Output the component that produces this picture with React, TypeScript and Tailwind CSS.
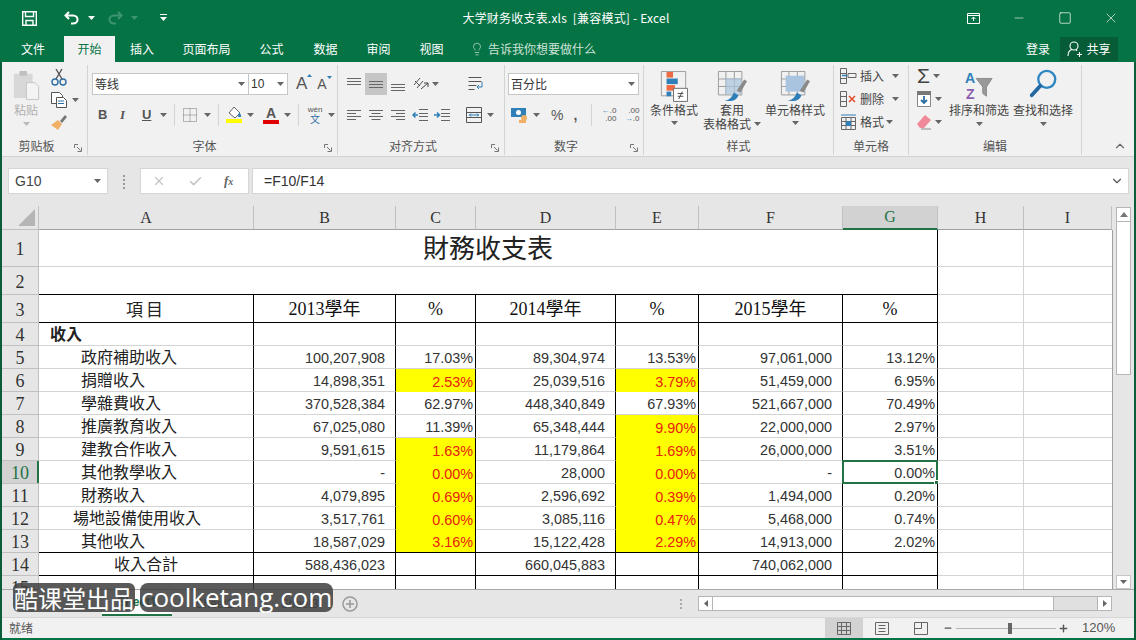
import React from 'react';
import { ChevronDown, ChevronUp, X, Check, Minus, Square, Plus, Lightbulb } from 'lucide-react';

const Caret = ({ className = '', fill = '#666' }: { className?: string; fill?: string }) => (
  <svg width="7" height="4" viewBox="0 0 7 4" className={`shrink-0 ${className}`}><path d="M0 0h7L3.5 4z" fill={fill} /></svg>
);

const Launcher = () => (
  <svg width="8" height="8" viewBox="0 0 8 8" className="absolute right-[5px] bottom-[3px]" fill="none" stroke="#777"><path d="M.5 4V.5H4M3 3l3.5 3.5M3.500 7.500h4v-4" /></svg>
);

const Group = ({ label, w, launcher, children }: { label: string; w: string; launcher?: boolean; children: React.ReactNode }) => (
  <div className={`${w} relative flex flex-col h-[90px] mt-[3px] border-r border-[#d4d4d4]`}>
    <div className="h-[72px]">{children}</div>
    <div className={`h-[18px] flex items-center justify-center text-[12px] text-[#555] ${launcher ? 'pr-[16px]' : ''}`}>{label}</div>
    {launcher && <Launcher />}
  </div>
);

const AlignV = ({ top }: { top: number }) => (
  <svg width="16" height="14" viewBox="0 0 16 14" fill="none" stroke="#666">
    <path d={`M1 ${top + 0.5}h14M1 ${top + 3.5}h14M1 ${top + 6.5}h14`} />
  </svg>
);

const AlignH = ({ d }: { d: string }) => (
  <svg width="16" height="14" viewBox="0 0 16 14" fill="none" stroke="#666"><path d={d} /></svg>
);

const TableIcon = ({ children }: { children?: React.ReactNode }) => (
  <svg width="30" height="32" viewBox="0 0 32 34" fill="none">
    <path d="M1.500 1.500h25v25h-25zM1.500 9.500h25M1.500 17.500h25M9.500 1.500v25M18.500 1.500v25" stroke="#999" />
    {children}
  </svg>
);

const Brush = () => (
  <g>
    <path d="M21 22l8-12 3 2-7 12z" fill="#8a8a8a" />
    <path d="M8 33c5-1 8-4 10-9l5 3c-2 4-5 6-9 6z" fill="#2e7fb8" />
  </g>
);

const BigBtn = ({ w, icon, lines, caret }: { w: string; icon: React.ReactNode; lines: string[]; caret?: 'inline' | 'below' }) => (
  <div className={`${w} flex flex-col items-center pt-[4px] text-[12px] text-[#444] leading-[14px]`}>
    <div className="h-[34px] flex items-center justify-center">{icon}</div>
    <div className="text-center whitespace-nowrap flex items-center">{lines[0]}</div>
    {lines[1] && <div className="whitespace-nowrap flex items-center gap-[3px]">{lines[1]}{caret === 'inline' && <Caret />}</div>}
    {caret === 'below' && <Caret className="mt-[4px]" />}
  </div>
);

const Ribbon = () => (
  <div className="h-[95px] bg-[#f1f1f1] border-b border-[#d2d2d2] flex pl-[2px] font-['Noto_Sans_CJK_SC','Liberation_Sans',sans-serif]">
    <Group label="剪贴板" w="w-[86px]" launcher>
      <div className="flex">
        <div className="w-[48px] flex flex-col items-center pt-[4px] text-[12px] text-[#b0b0b0] leading-[14px]">
          <svg width="28" height="32" viewBox="0 0 30 34">
            <path d="M2 5h20v26H2z" fill="#d8d8d8" />
            <path d="M8 2h8v5H8z" fill="#c0c0c0" />
            <path d="M15.500 14.500h9l4 4v14h-13z" fill="#f4f4f4" stroke="#c4c4c4" />
          </svg>
          <div className="mt-[2px]">粘贴</div>
          <Caret className="mt-[5px] opacity-40" />
        </div>
        <div className="flex flex-col pt-[2px] gap-[4px]">
          <svg width="18" height="20" viewBox="0 0 18 20" fill="none" stroke="#2f6ea5" strokeWidth="1.400"><circle cx="5" cy="15" r="3" /><circle cx="13" cy="15" r="3" /><path d="M6 12L12 2M12 12L6 2" stroke="#555" /></svg>
          <div className="flex items-center gap-[4px]">
            <svg width="18" height="18" viewBox="0 0 18 18" fill="#fff" stroke="#555"><path d="M1.500 1.500h8l3 3v8h-11z" /><path d="M6.500 6.500h7l3 3v7h-10z" /><path d="M8 10h6M8 12.500h6" stroke="#2f6ea5" /></svg>
            <Caret />
          </div>
          <svg width="18" height="18" viewBox="0 0 18 18"><path d="M10 8l5-6 2 2-5 6z" fill="#777" /><path d="M1 12l7-5 4 4-4 6z" fill="#f0b066" /></svg>
        </div>
      </div>
    </Group>
    <Group label="字体" w="w-[250px]" launcher>
      <div className="pl-[4px] pt-[8px]">
        <div className="flex items-center h-[22px]">
          <div className="w-[157px] h-full bg-white border border-[#c6c6c6] flex items-center justify-between pl-[2px] pr-[3px] text-[12px] text-[#333]">等线<Caret /></div>
          <div className="w-[39px] h-full bg-white border border-l-0 border-[#c6c6c6] flex items-center justify-between pl-[2px] pr-[3px] text-[12px] text-[#333] font-['Liberation_Sans',sans-serif]">10<Caret /></div>
          <span className="ml-[8px] text-[17px] text-[#555] font-['Liberation_Sans',sans-serif] relative">A<svg width="5" height="3" viewBox="0 0 5 3" className="absolute -right-[5px] top-[3px]"><path d="M0 3h5L2.500 0z" fill="#2f7fb8" /></svg></span>
          <span className="ml-[10px] text-[14px] text-[#555] font-['Liberation_Sans',sans-serif] relative">A<svg width="5" height="3" viewBox="0 0 5 3" className="absolute -right-[5px] top-[2px]"><path d="M0 0h5L2.500 3z" fill="#2f7fb8" /></svg></span>
        </div>
        <div className="flex items-center h-[20px] mt-[10px] pl-[6px] text-[#555] font-['Liberation_Sans',sans-serif] text-[13px]">
          <span className="w-[8px] font-bold">B</span>
          <span className="w-[6px] ml-[14px] italic font-['Liberation_Serif',serif] font-bold">I</span>
          <span className="w-[9px] ml-[16px] underline font-bold">U</span>
          <Caret className="ml-[9px]" />
          <div className="w-px h-[22px] bg-[#d4d4d4] ml-[7px]" />
          <svg width="14" height="14" viewBox="0 0 14 14" fill="none" stroke="#777" strokeDasharray="1 1" className="ml-[8px]"><path d="M.5.500h13v13H.500zM.500 7h13M7 .500v13" /></svg>
          <Caret className="ml-[7px]" />
          <div className="w-px h-[22px] bg-[#d4d4d4] ml-[7px]" />
          <svg width="16" height="16" viewBox="0 0 16 16" className="ml-[7px]"><path d="M8 0l6 6-5 5-6-5z" fill="#fff" stroke="#666" /><path d="M13 5l2 3v2h-3z" fill="#2f7fb8" /><path d="M0 12h16v4H0z" fill="#ffff00" /></svg>
          <Caret className="ml-[5px]" />
          <div className="ml-[9px] w-[16px] flex flex-col items-center">
            <span className="font-bold text-[14px] leading-[13px]">A</span>
            <div className="w-[16px] h-[4px] bg-[#e00000]" />
          </div>
          <Caret className="ml-[5px]" />
          <div className="w-px h-[22px] bg-[#d4d4d4] ml-[7px]" />
          <div className="ml-[8px] w-[16px] flex flex-col items-center text-[8px] leading-[8px]">
            <span>wén</span>
            <span className="text-[#2f6ea5] text-[10px] leading-[10px] font-['Noto_Sans_CJK_SC',sans-serif]">文</span>
          </div>
          <Caret className="ml-[5px]" />
        </div>
      </div>
    </Group>
    <Group label="对齐方式" w="w-[167px]" launcher>
      <div className="pl-[5px] pt-[8px]">
        <div className="flex items-center h-[22px]">
          <div className="w-[22px] flex justify-center"><AlignV top={1} /></div>
          <div className="w-[22px] h-[22px] bg-[#c6c6c6] flex items-center justify-center"><AlignV top={4} /></div>
          <div className="w-[22px] flex justify-center"><AlignV top={7} /></div>
          <svg width="18" height="16" viewBox="0 0 18 16" fill="none" stroke="#555" className="ml-[3px]"><path d="M2 9l6-7M5 12l6-7M3 5l5 5" /><path d="M9 13l7-6M16 7h-4M16 7v4" stroke="#444" /></svg>
          <Caret className="ml-[2px]" />
          <svg width="17" height="17" viewBox="0 0 17 17" fill="none" stroke="#555" className="ml-[28px]"><path d="M1.500 1.500h13M1.500 5.500h13M1.500 9.500h8M1.500 13.500h6" /><path d="M15 6v5h-5M12 9l-2 2 2 2" stroke="#2f7fb8" /></svg>
        </div>
        <div className="flex items-center h-[20px] mt-[10px]">
          <div className="w-[22px] flex justify-center"><AlignH d="M1 2.500h14M1 5.500h9M1 8.500h14M1 11.500h9" /></div>
          <div className="w-[22px] flex justify-center"><AlignH d="M1 2.500h14M3.500 5.500h9M1 8.500h14M3.500 11.500h9" /></div>
          <div className="w-[22px] flex justify-center"><AlignH d="M1 2.500h14M6 5.500h9M1 8.500h14M6 11.500h9" /></div>
          <svg width="16" height="14" viewBox="0 0 16 14" fill="none" stroke="#666" className="ml-[3px]"><path d="M7 1.500h9M7 5.500h9M7 8.500h9M7 12.500h9" /><path d="M6 7H1M3.500 4.500L1 7l2.500 2.500" stroke="#2f7fb8" strokeWidth="1.500" /></svg>
          <svg width="16" height="14" viewBox="0 0 16 14" fill="none" stroke="#666" className="ml-[6px]"><path d="M7 1.500h9M7 5.500h9M7 8.500h9M7 12.500h9" /><path d="M0 7h5M3 4.500L5.500 7 3 9.500" stroke="#2f7fb8" strokeWidth="1.500" /></svg>
          <svg width="16" height="16" viewBox="0 0 16 16" fill="none" stroke="#555" className="ml-[16px]"><path d="M.5.500h15v15H.500zM.500 5.500h15M.500 10.500h15" /><path d="M3 8h10M5 6.500L3.500 8 5 9.500M11 6.500L12.500 8 11 9.500" stroke="#2f7fb8" /></svg>
          <Caret className="ml-[5px]" />
        </div>
      </div>
    </Group>
    <Group label="数字" w="w-[139px]" launcher>
      <div className="pl-[3px] pt-[8px]">
        <div className="w-[131px] h-[22px] bg-white border border-[#c6c6c6] flex items-center justify-between pl-[2px] pr-[3px] text-[12px] text-[#333]">百分比<Caret /></div>
        <div className="flex items-center h-[20px] mt-[10px] text-[#555]">
          <svg width="18" height="18" viewBox="0 0 18 18" className="ml-[3px]"><path d="M0 2h15v9H0z" fill="#2f7fb8" /><circle cx="7.500" cy="6.500" r="2.500" fill="#fff" /><circle cx="13" cy="12" r="3" fill="#f0b066" /><path d="M8 14h7v3H8z" fill="#f0b066" /></svg>
          <Caret className="ml-[4px]" />
          <span className="ml-[11px] text-[14px] font-['Liberation_Sans',sans-serif]">%</span>
          <span className="ml-[10px] text-[14px] font-bold font-['Liberation_Sans',sans-serif]">,</span>
          <div className="w-px h-[22px] bg-[#d4d4d4] ml-[14px]" />
          <div className="ml-[8px] text-[8px] leading-[8px] font-['Liberation_Sans',sans-serif] text-right w-[16px]"><span className="text-[#2f7fb8]">←</span>.0<br />.00</div>
          <div className="ml-[7px] text-[8px] leading-[8px] font-['Liberation_Sans',sans-serif] text-right w-[16px]">.00<br /><span className="text-[#2f7fb8]">→</span>.0</div>
        </div>
      </div>
    </Group>
    <Group label="样式" w="w-[190px]">
      <div className="flex pl-[4px]">
        <BigBtn w="w-[52px]" caret="below" lines={['条件格式']} icon={
          <svg width="28" height="32" viewBox="0 0 30 34" fill="none">
            <path d="M1.500 1.500h26v26h-26z" stroke="#999" />
            <path d="M7 2h7v6H7z" fill="#ee6a45" /><path d="M7 9h12v6H7z" fill="#2f7fb8" /><path d="M7 16h9v6H7z" fill="#ee6a45" /><path d="M7 23h5v5H7z" fill="#2f7fb8" />
            <path d="M14.500 19.500h15v14h-15z" fill="#fff" stroke="#666" />
            <path d="M19 25h6M19 28h6M24 23l-4 8" stroke="#444" />
          </svg>} />
        <BigBtn w="w-[64px]" caret="inline" lines={['套用', '表格格式']} icon={
          <TableIcon><path d="M9 9h17v17H9z" fill="#a9c4de" opacity=".7" /><Brush /></TableIcon>} />
        <BigBtn w="w-[62px]" caret="below" lines={['单元格样式']} icon={
          <TableIcon><path d="M6 6h20v17H6z" fill="#a9c4de" /><Brush /></TableIcon>} />
      </div>
    </Group>
    <Group label="单元格" w="w-[75px]">
      <div className="pl-[6px] pt-[2px] flex flex-col gap-[5px] text-[12px] text-[#444] leading-[18px]">
        <div className="flex items-center h-[18px]">
          <svg width="17" height="16" viewBox="0 0 17 16" fill="none" stroke="#666"><path d="M.5.500h6v15h-6zM.5 5.500h6M.5 10.500h6M8 5.500h8v4H8z" /><path d="M7 7.500H2" stroke="#2f7fb8" strokeWidth="1.500" /></svg>
          <span className="ml-[3px]">插入</span><Caret className="ml-[8px]" />
        </div>
        <div className="flex items-center h-[18px]">
          <svg width="17" height="16" viewBox="0 0 17 16" fill="none" stroke="#666"><path d="M.5.500h6v15h-6zM.5 5.500h6M.5 10.500h6" /><path d="M9 5l6 6M15 5l-6 6" stroke="#e05030" strokeWidth="1.600" /></svg>
          <span className="ml-[3px]">删除</span><Caret className="ml-[8px]" />
        </div>
        <div className="flex items-center h-[18px]">
          <svg width="17" height="16" viewBox="0 0 17 16" fill="none" stroke="#666"><path d="M1.500 3.500h14v12h-14zM1.500 7.500h14M1.500 11.500h14M6 3.500v12M11 3.500v12" /><path d="M6 7h5v5H6z" fill="#2f7fb8" stroke="none" /><path d="M1 1h15" stroke="#2f7fb8" /></svg>
          <span className="ml-[3px]">格式</span><Caret className="ml-[2px]" />
        </div>
      </div>
    </Group>
    <Group label="编辑" w="w-[173px]">
      <div className="flex pl-[8px]">
        <div className="w-[34px] pt-[2px] flex flex-col gap-[5px]">
          <div className="h-[18px] flex items-center gap-[3px]">
            <span className="text-[21px] leading-[18px] text-[#444] font-['Liberation_Sans',sans-serif]">Σ</span><Caret />
          </div>
          <div className="h-[18px] flex items-center gap-[4px]">
            <svg width="14" height="16" viewBox="0 0 14 16"><path d="M.5.500h13v15H.500z" fill="#fff" stroke="#888" /><path d="M0 0h14v4H0z" fill="#777" /><path d="M7 5v7M4 9l3 3 3-3" stroke="#2f6ea5" strokeWidth="1.800" fill="none" /></svg>
            <Caret />
          </div>
          <div className="h-[18px] flex items-center gap-[4px]">
            <svg width="14" height="16" viewBox="0 0 14 16"><path d="M0 10l8-9 6 5-7 8H3z" fill="#f08a9a" /><path d="M4 15h10" stroke="#888" /></svg>
            <Caret />
          </div>
        </div>
        <div className="flex flex-col items-center w-[64px] pt-[4px] text-[12px] text-[#444] leading-[14px] -ml-[4px]">
          <svg width="30" height="32" viewBox="0 0 32 34" fill="none">
            <text x="1" y="15" fontSize="15" fontWeight="bold" fill="#2f7fb8" fontFamily="Liberation Sans">A</text>
            <text x="2" y="32" fontSize="15" fontWeight="bold" fill="#8e5fb0" fontFamily="Liberation Sans">Z</text>
            <path d="M13 10h17l-6 9v10l-4-3v-7z" fill="#999" stroke="#8a8a8a" />
          </svg>
          <div className="mt-[2px] whitespace-nowrap">排序和筛选</div>
          <Caret className="mt-[5px]" />
        </div>
        <div className="flex flex-col items-center w-[62px] pt-[4px] text-[12px] text-[#444] leading-[14px] ml-[1px]">
          <svg width="30" height="32" viewBox="0 0 30 34" fill="none">
            <circle cx="19" cy="11" r="9" stroke="#2f86c1" strokeWidth="2.500" />
            <path d="M12 18L3 28" stroke="#2368a0" strokeWidth="4" strokeLinecap="round" />
          </svg>
          <div className="mt-[2px] whitespace-nowrap">查找和选择</div>
          <Caret className="mt-[5px]" />
        </div>
      </div>
    </Group>
    <div className="flex-1 flex items-end justify-end pr-[9px] pb-[3px]"><ChevronUp size={14} color="#666" /></div>
  </div>
);

const FormulaBar = () => (
  <div className="h-[49px] bg-[#e6e6e6] flex items-start pt-[11px] pl-[8px] font-['Liberation_Sans',sans-serif]">
    <div className="w-[100px] h-[26px] bg-white border border-[#d6d6d6] flex items-center justify-between pl-[6px] pr-[6px] text-[14px] text-[#444]">G10<Caret /></div>
    <div className="w-[32px] flex flex-col items-center gap-[2px] mt-[7px]">
      <span className="w-[2px] h-[2px] bg-[#999]" /><span className="w-[2px] h-[2px] bg-[#999]" /><span className="w-[2px] h-[2px] bg-[#999]" /><span className="w-[2px] h-[2px] bg-[#999]" />
    </div>
    <div className="w-[109px] h-[26px] bg-white border border-[#d6d6d6] flex items-center pl-[11px]">
      <X size={14} color="#c4c4c4" strokeWidth={2} />
      <Check size={15} color="#c4c4c4" strokeWidth={2.500} className="ml-[22px]" />
      <span className="ml-[21px] text-[13px] italic font-bold text-[#666] font-['Liberation_Serif',serif]">f<span className="text-[10px]">x</span></span>
    </div>
    <div className="ml-[3px] w-[877px] h-[26px] bg-white border border-[#d6d6d6] flex items-center justify-between pl-[11px] pr-[4px] text-[14px] text-[#333]">
      =F10/F14<ChevronDown size={14} color="#555" />
    </div>
  </div>
);

const cols = ['A', 'B', 'C', 'D', 'E', 'F', 'G', 'H', 'I'];
const gridCols = 'grid grid-cols-[37px_215px_142px_80px_140px_83px_144px_95px_86px_88px]';

type Row = { n: number; label: string; kind: string; b?: string; c?: string; d?: string; e?: string; f?: string; g?: string; hotC?: boolean; hotE?: boolean; line?: boolean };

const rows: Row[] = [
  { n: 4, label: '收入', kind: 'head' },
  { n: 5, label: '政府補助收入', kind: 'item', b: '100,207,908', c: '17.03%', d: '89,304,974', e: '13.53%', f: '97,061,000', g: '13.12%' },
  { n: 6, label: '捐贈收入', kind: 'item', b: '14,898,351', c: '2.53%', d: '25,039,516', e: '3.79%', f: '51,459,000', g: '6.95%', hotC: true, hotE: true },
  { n: 7, label: '學雜費收入', kind: 'item', b: '370,528,384', c: '62.97%', d: '448,340,849', e: '67.93%', f: '521,667,000', g: '70.49%' },
  { n: 8, label: '推廣教育收入', kind: 'item', b: '67,025,080', c: '11.39%', d: '65,348,444', e: '9.90%', f: '22,000,000', g: '2.97%', hotE: true },
  { n: 9, label: '建教合作收入', kind: 'item', b: '9,591,615', c: '1.63%', d: '11,179,864', e: '1.69%', f: '26,000,000', g: '3.51%', hotC: true, hotE: true },
  { n: 10, label: '其他教學收入', kind: 'item', b: '-', c: '0.00%', d: '28,000', e: '0.00%', f: '-', g: '0.00%', hotC: true, hotE: true },
  { n: 11, label: '財務收入', kind: 'item', b: '4,079,895', c: '0.69%', d: '2,596,692', e: '0.39%', f: '1,494,000', g: '0.20%', hotC: true, hotE: true },
  { n: 12, label: '場地設備使用收入', kind: 'wide', b: '3,517,761', c: '0.60%', d: '3,085,116', e: '0.47%', f: '5,468,000', g: '0.74%', hotC: true, hotE: true },
  { n: 13, label: '其他收入', kind: 'item', b: '18,587,029', c: '3.16%', d: '15,122,428', e: '2.29%', f: '14,913,000', g: '2.02%', hotC: true, hotE: true, line: true },
  { n: 14, label: '收入合計', kind: 'total', b: '588,436,023', d: '660,045,883', f: '740,062,000', line: true },
  { n: 15, label: '', kind: 'item' },
];

const RowHead = ({ n, active, h }: { n: number; active?: boolean; h: string }) => (
  <div className={`${h} relative flex items-center justify-center border-r border-b border-[#c0c0c0] text-[18px] leading-none pt-[2px] font-['Liberation_Serif',serif] ${active ? 'bg-[#d2d2d2] text-[#217346]' : 'bg-[#e6e6e6] text-[#333]'}`}>
    {n}
    {active && <span className="absolute right-[-1px] top-0 bottom-0 w-[2px] bg-[#217346]" />}
  </div>
);

const numCell = "h-[23px] flex items-center justify-end pt-[3px] leading-none text-[14.4px] text-[#333] font-['Liberation_Sans',sans-serif] border-r border-black";

const DataRow = ({ r }: { r: Row }) => {
  const bottom = r.line ? 'border-b border-b-black' : 'border-b border-b-[#d4d4d4]';
  const active = r.n === 10;
  const pct = (v: string | undefined, hot?: boolean) => (
    <div className={`${numCell} pr-[2px] ${hot ? `bg-[#ffff00] text-[#e8200c] ${r.line ? 'border-b border-b-black' : ''}` : bottom}`}>{v}</div>
  );
  return (
    <div className={gridCols}>
      <RowHead n={r.n} h="h-[23px]" active={active} />
      <div className={`h-[23px] flex items-center pb-[2px] leading-none border-r border-black ${bottom} text-[16px] text-[#222] font-['Noto_Sans_CJK_TC',sans-serif] ${r.kind === 'head' ? 'pl-[11px] font-bold' : r.kind === 'item' ? 'pl-[42px]' : r.kind === 'wide' ? 'pl-[34px]' : 'justify-center'}`}>{r.label}</div>
      <div className={`${numCell} ${bottom} pr-[10px]`}>{r.b}</div>
      {pct(r.c, r.hotC)}
      <div className={`${numCell} ${bottom} pr-[10px]`}>{r.d}</div>
      {pct(r.e, r.hotE)}
      <div className={`${numCell} ${bottom} pr-[10px]`}>{r.f}</div>
      <div className={`${numCell} ${bottom} pr-[2px] relative`}>
        {r.g}
        {active && (
          <span className="absolute -left-[1px] -top-[1px] -right-[1px] -bottom-[1px] border-2 border-[#217346]">
            <span className="absolute -right-[3px] -bottom-[3px] w-[5px] h-[5px] bg-[#217346] border border-white" />
          </span>
        )}
      </div>
      <div className="border-r border-b border-[#d4d4d4]" />
      <div className="border-b border-[#d4d4d4]" />
    </div>
  );
};

const Sheet = () => (
  <div className="flex-1 min-h-0 flex bg-[#e6e6e6] pl-[2px] overflow-hidden">
    <div className="w-[1111px] shrink-0 overflow-hidden">
      <div className={gridCols}>
        <div className="h-[24px] bg-[#e6e6e6] border-r border-b border-[#c0c0c0] flex items-end justify-end pr-[3px] pb-[3px]">
          <svg width="17" height="17" viewBox="0 0 17 17"><path d="M17 0v17H0z" fill="#b5b5b5" /></svg>
        </div>
        {cols.map(c => (
          <div key={c} className={`h-[24px] flex items-center justify-center border-r border-[#c0c0c0] text-[16px] font-['Liberation_Serif',serif] ${c === 'G' ? 'bg-[#d2d2d2] text-[#217346] border-b-2 border-b-[#217346]' : 'bg-[#e6e6e6] text-[#333] border-b border-b-[#a0a0a0]'}`}>{c}</div>
        ))}
      </div>
      <div className="bg-white border-r border-[#a0a0a0] h-[400px]">
        <div className={gridCols}>
          <RowHead n={1} h="h-[37px]" />
          <div className="col-span-7 border-r border-black border-b border-b-[#d4d4d4] flex items-center justify-center pb-[2px] text-[26px] leading-none text-[#222] font-['Noto_Sans_CJK_TC',sans-serif]">財務收支表</div>
          <div className="border-r border-b border-[#d4d4d4]" />
          <div className="border-b border-[#d4d4d4]" />
        </div>
        <div className={gridCols}>
          <RowHead n={2} h="h-[28px]" />
          <div className="col-span-7 border-r border-black border-b border-b-black" />
          <div className="border-r border-b border-[#d4d4d4]" />
          <div className="border-b border-[#d4d4d4]" />
        </div>
        <div className={gridCols}>
          <RowHead n={3} h="h-[28px]" />
          <div className="flex items-center justify-center border-r border-b border-black text-[17px] leading-none tracking-[3px] text-[#222] font-['Noto_Sans_CJK_TC',sans-serif]">項目</div>
          {['2013學年', '%', '2014學年', '%', '2015學年', '%'].map((t, i) => (
            <div key={i} className="flex items-center justify-center border-r border-b border-black text-[18px] leading-none text-[#111] font-['Liberation_Serif','Noto_Sans_CJK_TC',serif]">{t}</div>
          ))}
          <div className="border-r border-b border-[#d4d4d4]" />
          <div className="border-b border-[#d4d4d4]" />
        </div>
        {rows.map(r => <DataRow key={r.n} r={r} />)}
      </div>
    </div>
    <div className="w-[21px] flex flex-col pl-[3px] pr-[3px] pt-[1px]">
      <div className="h-[15px] bg-white border border-[#b5b5b5] flex items-center justify-center"><svg width="8" height="5" viewBox="0 0 8 5"><path d="M0 5h8L4 0z" fill="#777" /></svg></div>
      <div className="h-[153px] bg-white border border-t-0 border-[#b5b5b5]" />
      <div className="flex-1" />
      <div className="h-[14px] bg-white border border-[#c6c6c6] flex items-center justify-center"><Caret /></div>
    </div>
  </div>
);

const SheetTabs = () => (
  <div className="h-[28px] bg-[#e6e6e6] border-t border-[#a8a8a8] flex items-center pl-[2px] text-[12px] text-[#555] font-['Liberation_Sans',sans-serif]">
    <div className="w-[100px]" />
    <div className="w-[70px] h-[26px] -mt-[1px] bg-white border-b-2 border-[#217346] flex items-center justify-center text-[#217346] font-bold">Sheet1</div>
    <div className="w-[85px] text-center">Sheet2</div>
    <div className="w-[85px] text-center">Sheet3</div>
    <svg width="16" height="16" viewBox="0 0 16 16" fill="none" stroke="#999" strokeWidth="1.500"><circle cx="8" cy="8" r="7" /><path d="M8 4v8M4 8h8" /></svg>
    <div className="ml-[322px] flex flex-col gap-[2px]">
      <span className="w-[2px] h-[2px] bg-[#aaa]" /><span className="w-[2px] h-[2px] bg-[#aaa]" /><span className="w-[2px] h-[2px] bg-[#aaa]" />
    </div>
    <div className="ml-[16px] w-[414px] h-[15px] flex border border-[#b5b5b5] bg-[#e0e0e0]">
      <div className="w-[14px] bg-white border-r border-[#b5b5b5] flex items-center justify-center"><svg width="4" height="7" viewBox="0 0 4 7"><path d="M4 0v7L0 3.500z" fill="#666" /></svg></div>
      <div className="w-[341px] bg-white border-r border-[#b5b5b5]" />
      <div className="flex-1" />
      <div className="w-[14px] bg-white border-l border-[#b5b5b5] flex items-center justify-center"><svg width="4" height="7" viewBox="0 0 4 7"><path d="M0 0v7l4-3.500z" fill="#666" /></svg></div>
    </div>
  </div>
);

const StatusBar = () => (
  <div className="h-[21px] bg-[#f1f1f1] border-t border-[#d6d6d6] flex items-center pl-[9px] text-[12px] text-[#555] font-['Noto_Sans_CJK_SC',sans-serif]">
    <span className="w-[816px]">就绪</span>
    <div className="w-[38px] h-[21px] bg-[#d2d2d2] flex items-center justify-center">
      <svg width="14" height="13" viewBox="0 0 14 13" fill="none" stroke="#666"><path d="M.5.500h13v12H.500zM.500 4.500h13M.500 8.500h13M4.500.500v12M9.500.500v12" /></svg>
    </div>
    <svg width="14" height="13" viewBox="0 0 14 13" fill="none" stroke="#666" className="ml-[12px]"><path d="M.5.500h13v12H.500zM3.500 3.500h7M3.500 6.500h7M3.500 9.500h7" /></svg>
    <svg width="14" height="13" viewBox="0 0 14 13" fill="none" stroke="#666" className="ml-[25px]"><path d="M.5.500h13v12H.500zM7.500.500v6H.5" /></svg>
    <Minus size={10} color="#555" strokeWidth={3} className="ml-[15px]" />
    <div className="ml-[3px] w-[100px] h-px bg-[#b5b5b5] relative">
      <span className="absolute left-[52px] -top-[5px] w-[4px] h-[11px] bg-[#666]" />
    </div>
    <Plus size={11} color="#555" strokeWidth={3} className="ml-[2px]" />
    <span className="ml-[13px] text-[#555] font-['Liberation_Sans',sans-serif] text-[13px]">120%</span>
  </div>
);

export default function App() {
  return (
    <div className="relative w-[1136px] h-[640px] overflow-hidden flex flex-col bg-[#067345] font-['Noto_Sans_CJK_SC','Liberation_Sans',sans-serif]">
      <div className="h-[36px] text-white flex items-center">
        <div className="w-[400px] flex items-center pl-[22px]">
          <svg width="15" height="15" viewBox="0 0 15 15" fill="none" stroke="#fff" strokeWidth="1.400"><path d="M.7.700h13.600v13.600H.700z" /><path d="M3.500 1v4.500h8V1M4 14V9.500h7V14" /></svg>
          <svg width="16" height="14" viewBox="0 0 16 14" fill="none" stroke="#fff" strokeWidth="2" className="ml-[27px]"><path d="M5 1L1.500 4.500 5 8" /><path d="M2 4.500h7c6 0 6 8 0 8H7" /></svg>
          <Caret className="ml-[8px]" fill="#fff" />
          <svg width="16" height="14" viewBox="0 0 16 14" fill="none" stroke="#3d9470" strokeWidth="2" className="ml-[12px]"><path d="M11 1l3.500 3.500L11 8" /><path d="M14 4.500H7c-6 0-6 8 0 8h2" /></svg>
          <Caret className="ml-[8px]" fill="#3d9470" />
          <svg width="7" height="8" viewBox="0 0 7 8" fill="#fff" className="ml-[22px]"><path d="M0 0h7v1H0zM0 3h7L3.500 7z" /></svg>
        </div>
        <div className="w-[332px] text-center text-[12px] tracking-[0.2px]">大学财务收支表.xls&nbsp;&nbsp;[兼容模式] - Excel</div>
        <div className="ml-[218px] flex items-center">
          <div className="w-[46px] flex justify-center">
            <svg width="13" height="11" viewBox="0 0 13 11" fill="none" stroke="#fff"><path d="M.5.500h12v10H.500zM.5 2.500h12M6.500 8V4M4.500 6l2-2 2 2" /></svg>
          </div>
          <div className="w-[46px] flex justify-center"><Minus size={14} strokeWidth={1} /></div>
          <div className="w-[46px] flex justify-center"><Square size={14} strokeWidth={1.200} /></div>
          <div className="w-[46px] flex justify-center"><X size={16} strokeWidth={1} /></div>
        </div>
      </div>
      <div className="h-[26px] flex items-stretch pl-[2px] text-[12px] text-white">
        <div className="w-[62px] flex items-center justify-center">文件</div>
        <div className="w-[51px] bg-[#f1f1f1] text-[#067345] flex items-center justify-center">开始</div>
        <div className="w-[54px] flex items-center justify-center">插入</div>
        <div className="w-[75px] flex items-center justify-center">页面布局</div>
        <div className="w-[55px] flex items-center justify-center">公式</div>
        <div className="w-[53px] flex items-center justify-center">数据</div>
        <div className="w-[53px] flex items-center justify-center">审阅</div>
        <div className="w-[53px] flex items-center justify-center">视图</div>
        <div className="flex items-center ml-[12px] text-[#cfe3d8]"><Lightbulb size={14} strokeWidth={1.200} className="mr-[4px]" />告诉我你想要做什么</div>
        <div className="ml-auto flex items-center mr-[18px]">
          <span className="mr-[10px]">登录</span>
          <div className="w-[58px] h-[24px] bg-[#055c36] flex items-center justify-center gap-[3px]">
            <svg width="16" height="16" viewBox="0 0 16 16" fill="none" stroke="#fff" strokeWidth="1.100"><circle cx="7" cy="5" r="4" /><path d="M1 15c0-4 2-6 4-6.500M9 8.500l1 1.500M12.500 11v5M10 13.500h5" /></svg>
            共享
          </div>
        </div>
      </div>
      <Ribbon />
      <FormulaBar />
      <Sheet />
      <SheetTabs />
      <StatusBar />
      <div className="h-[2px] bg-[#067345]" />
      <div className="absolute left-0 top-[62px] bottom-0 w-[2px] bg-[#0d5c39]" />
      <div className="absolute right-0 top-[62px] bottom-0 w-[2px] bg-[#0d5c39]" />
      <div className="absolute left-[13px] top-[583px] flex items-center gap-[5px] text-white leading-[29px]">
        <span className="bg-[#3d3d3d]/85 rounded-[6px] px-[1px] text-[24px] font-['Noto_Sans_CJK_SC',sans-serif]">酷课堂出品</span>
        <span className="bg-[#3d3d3d]/85 rounded-[8px] px-[1px] text-[26px] font-['Open_Sans',sans-serif]">coolketang.com</span>
      </div>
    </div>
  );
}
